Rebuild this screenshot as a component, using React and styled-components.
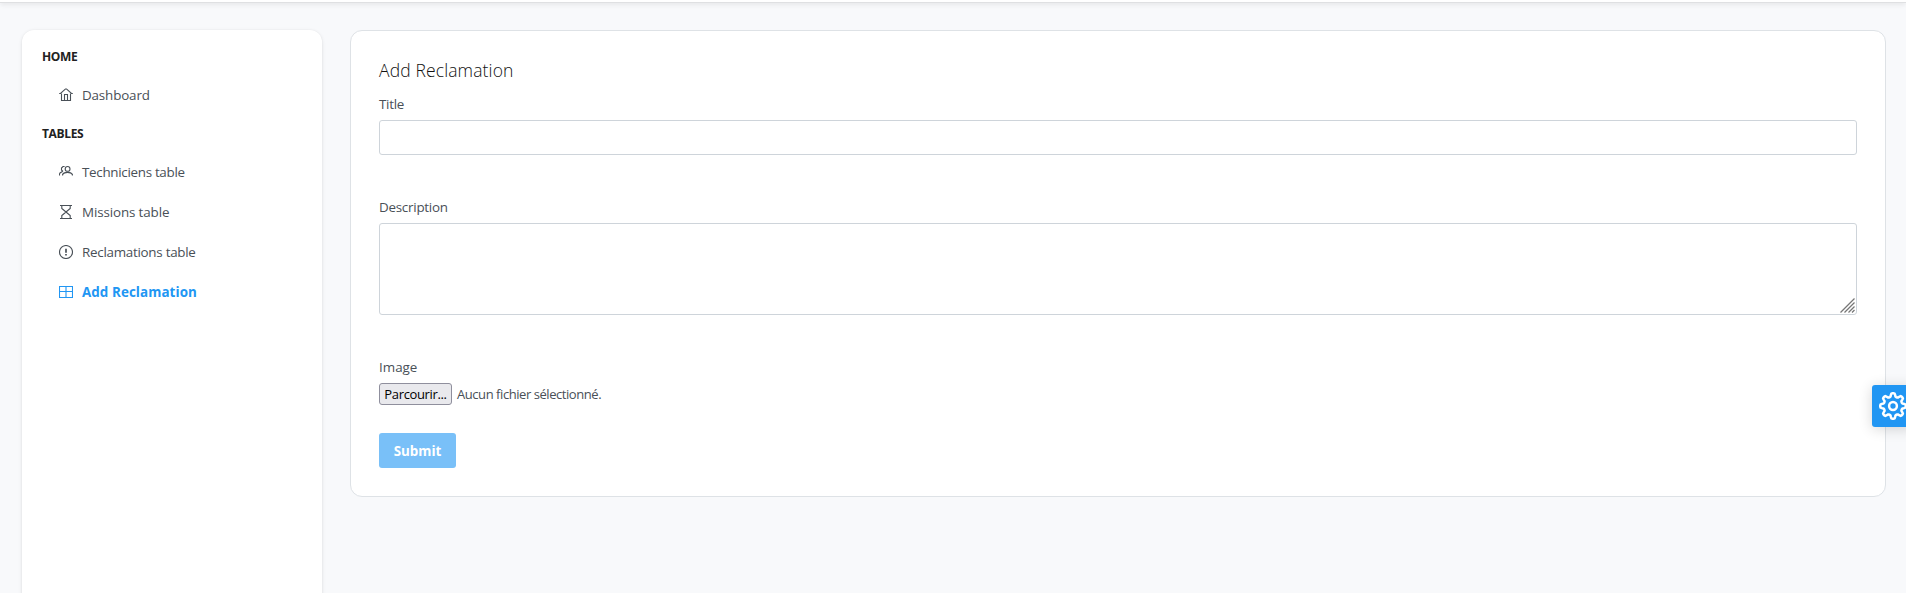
import React from "react";
import styled, { createGlobalStyle, css } from "styled-components";

const GlobalStyle = createGlobalStyle`
  *, *::before, *::after { box-sizing: border-box; }
  html, body { margin: 0; height: 100%; overflow: hidden; }
  body {
    background: #f8f9fb;
    color: #495057;
    font-family: "Open Sans", "Noto Sans", sans-serif;
    font-size: 13.4px;
    line-height: 20px;
  }
`;

const Page = styled.div`
  height: 100vh;
  overflow: hidden;
`;

const Topbar = styled.header`
  height: 3px;
  background: #fff;
  border-bottom: 1px solid #dfe0e2;
  box-shadow: 0 3px 5px rgba(0, 0, 0, 0.03), 0 1px 4px rgba(0, 0, 0, 0.08);
`;

const Layout = styled.div`
  display: flex;
  align-items: flex-start;
  gap: 28px;
  padding: 27px 20px 0 22px;
`;

const Sidebar = styled.nav`
  flex: 0 0 300px;
  height: 620px;
  padding: 17px 20px;
  background: #fff;
  border-radius: 12px;
  box-shadow: 0 3px 5px rgba(0, 0, 0, 0.02), 0 0 2px rgba(0, 0, 0, 0.05), 0 1px 4px rgba(0, 0, 0, 0.08);
`;

const SectionTitle = styled.div`
  height: 20px;
  font-size: 12px;
  font-weight: 700;
  letter-spacing: -0.35px;
  color: #212121;
`;

const MenuList = styled.ul`
  list-style: none;
  margin: 0;
  padding: 8px 0 9px 17px;
`;

const MenuItem = styled.li`
  display: flex;
  align-items: center;
  gap: 9px;
  height: 40px;
  letter-spacing: ${(p) => p.$track || "0"};
  ${(p) =>
    p.$active &&
    css`
      color: #2196f3;
      font-weight: 700;
    `}
`;

const Icon = styled.svg`
  display: block;
  flex: none;
  width: 14px;
  height: 14px;
  margin-top: -1px;
  fill: none;
  stroke: currentColor;
  stroke-width: 1.1;
`;

const Card = styled.main`
  flex: 1;
  height: 467px;
  padding: 27px 28px;
  background: #fff;
  border: 1px solid #dee2e6;
  border-radius: 12px;
`;

const CardTitle = styled.h5`
  margin: 0 0 12px;
  height: 24px;
  font-size: 17.5px;
  font-weight: 300;
  line-height: 24px;
  letter-spacing: 0.13px;
  color: #111;
`;

const Field = styled.div`
  display: flex;
  flex-direction: column;
  align-items: stretch;
  gap: 6px;
  margin-bottom: ${(p) => p.$after}px;
`;

const Label = styled.label`
  height: 20px;
  letter-spacing: ${(p) => p.$track || "0"};
`;

const control = css`
  display: block;
  width: 100%;
  margin: 0;
  border: 1px solid #ced4da;
  border-radius: 3px;
  background: #fff;
  outline: none;
`;

const TextInput = styled.input`
  ${control}
  height: 35px;
`;

const AreaFrame = styled.div`
  ${control}
  display: flex;
  align-items: flex-end;
  height: 92px;
`;

const Area = styled.textarea`
  flex: 1;
  height: 90px;
  padding: 7px;
  border: 0;
  border-radius: 3px;
  background: transparent;
  outline: none;
  resize: none;
`;

const Grip = styled.svg`
  flex: none;
  width: 15px;
  height: 15px;
  margin: 0 1px 1px 0;
  fill: none;
  stroke: #777;
  stroke-width: 1.3;
`;

const FileRow = styled.div`
  display: flex;
  align-items: center;
  height: 22px;
  gap: 5px;
  font-size: 13px;
`;

const BrowseButton = styled.button`
  width: 73px;
  height: 22px;
  padding: 0;
  border: 1px solid #8f8f9d;
  border-radius: 3px;
  background: #e9e9ed;
  color: #000;
  font: inherit;
  line-height: 18px;
  letter-spacing: -0.35px;
`;

const FileName = styled.span`
  letter-spacing: -0.44px;
`;

const SubmitButton = styled.button`
  display: block;
  width: 77px;
  height: 35px;
  padding: 1px 0 0;
  border: 0;
  border-radius: 3px;
  background: #79c0f8;
  color: #fff;
  font: inherit;
  font-weight: 700;
`;

const ConfigButton = styled.button`
  position: fixed;
  top: 385px;
  right: -8px;
  display: flex;
  align-items: center;
  justify-content: center;
  width: 42px;
  height: 42px;
  padding: 0;
  border: 0;
  border-radius: 3px 0 0 3px;
  background: #2196f3;
  color: #fff;
  box-shadow: 0 2px 14px rgba(0, 0, 0, 0.16);
`;

const Cog = styled.svg`
  width: 28px;
  height: 28px;
  fill: none;
  stroke: currentColor;
  stroke-width: 2.5;
  stroke-linejoin: round;
`;

const icons = {
  home: (
    <>
      <path d="M.2 5.5h1.3L6 1.4 7 .8l1 .6 4.5 4.1h1.3" />
      <path d="M2.5 5.5v7h9v-7M5.5 12.5v-6h3v6" />
    </>
  ),
  users: (
    <>
      <circle cx="8.6" cy="3.9" r="2.4" />
      <path d="M3.6 10.6V9.4c1-1.6 2.6-2 5-2s3.9.5 4.8 2v1.2M5.6 1.5H4L2.5 3v2L4 6.5M3.5 6.5 1 8 .5 9v1.6" />
    </>
  ),
  hourglass: (
    <path d="M1 .5h12M1 13.5h12M2.8.5v3L7 7l4.2 3.5v3M11.2.5v3L7 7l-4.2 3.5v3" />
  ),
  alert: (
    <>
      <circle cx="7" cy="7" r="6.5" />
      <path d="M7 3.8v4M7 9v1.6" strokeWidth="1.7" />
    </>
  ),
  table: <path d="M.5 1.5h13v11H.5zM7 1.5v11M.5 6.5h13" />,
};

const MenuIcon = ({ name }) => (
  <Icon viewBox="0 0 14 14" aria-hidden="true">
    {icons[name]}
  </Icon>
);

const menu = [
  {
    title: "HOME",
    items: [{ icon: "home", label: "Dashboard", track: "-0.15px" }],
  },
  {
    title: "TABLES",
    items: [
      { icon: "users", label: "Techniciens table", track: "-0.3px" },
      { icon: "hourglass", label: "Missions table", track: "-0.12px" },
      { icon: "alert", label: "Reclamations table", track: "-0.27px" },
      { icon: "table", label: "Add Reclamation", track: "0.08px", active: true },
    ],
  },
];

// Closed outline of an eight-lobed gear centred in a 28-unit box.
const cogOutline = (() => {
  const points = [];
  for (let i = 0; i < 96; i += 1) {
    const a = (i / 96) * Math.PI * 2;
    const wave = Math.cos(a * 8);
    const r = 11.1 + 1.7 * Math.tanh(wave * 2.2);
    points.push(`${(14 + r * Math.cos(a)).toFixed(2)} ${(14 + r * Math.sin(a)).toFixed(2)}`);
  }
  return `M${points.join("L")}Z`;
})();

export default function App() {
  return (
    <Page>
      <GlobalStyle />
      <Topbar />
      <Layout>
        <Sidebar>
          {menu.map((section) => (
            <React.Fragment key={section.title}>
              <SectionTitle>{section.title}</SectionTitle>
              <MenuList>
                {section.items.map((item) => (
                  <MenuItem key={item.label} $active={item.active} $track={item.track}>
                    <MenuIcon name={item.icon} />
                    <span>{item.label}</span>
                  </MenuItem>
                ))}
              </MenuList>
            </React.Fragment>
          ))}
        </Sidebar>
        <Card>
          <CardTitle>Add Reclamation</CardTitle>
          <Field $after={42}>
            <Label htmlFor="title" $track="-0.3px">Title</Label>
            <TextInput id="title" />
          </Field>
          <Field $after={42}>
            <Label htmlFor="description" $track="-0.25px">Description</Label>
            <AreaFrame>
              <Area id="description" />
              <Grip viewBox="0 0 15 15" aria-hidden="true">
                <path d="M.5 14.5l14-14M4.5 14.5l10-10M8.5 14.5l6-6M12 14.5l2.5-2.5" />
              </Grip>
            </AreaFrame>
          </Field>
          <Field $after={28}>
            <Label>Image</Label>
            <FileRow>
              <BrowseButton type="button">Parcourir...</BrowseButton>
              <FileName>Aucun fichier sélectionné.</FileName>
            </FileRow>
          </Field>
          <SubmitButton type="button">Submit</SubmitButton>
        </Card>
      </Layout>
      <ConfigButton type="button" aria-label="Settings">
        <Cog viewBox="0 0 28 28" aria-hidden="true">
          <path d={cogOutline} />
          <circle cx="14" cy="14" r="3.9" />
        </Cog>
      </ConfigButton>
    </Page>
  );
}
